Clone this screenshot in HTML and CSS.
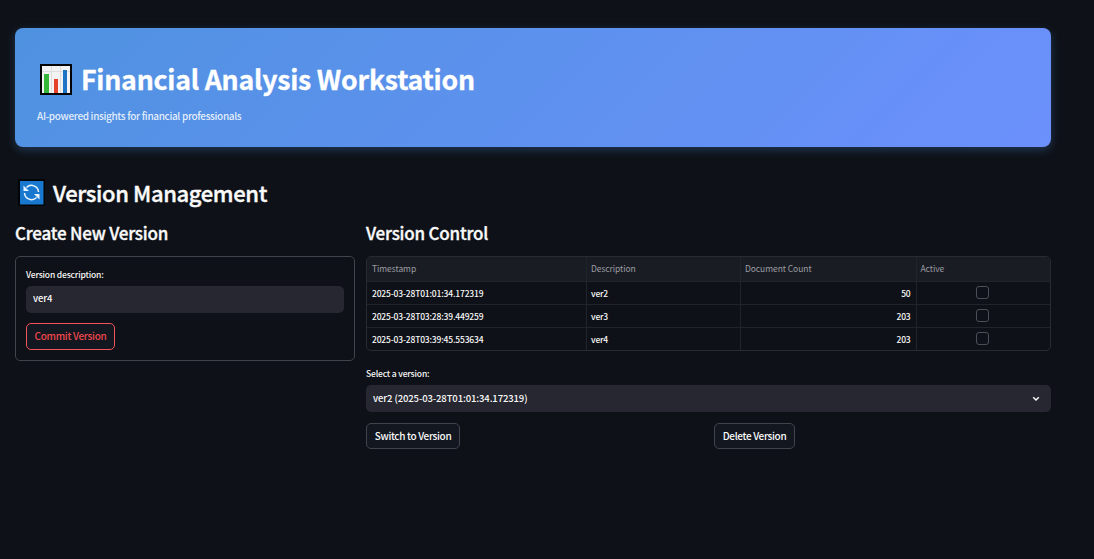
FILE: index.html
```html
<!DOCTYPE html>
<html lang="en">
<head>
<meta charset="utf-8">
<title>Financial Analysis Workstation</title>
<link rel="stylesheet" href="styles.css">
</head>
<body>
<main class="page">
  <header class="banner">
    <h1 class="banner-title">
      <svg class="chart-icon" viewBox="0 0 32 32" aria-hidden="true">
        <rect width="32" height="31" fill="#030405"/>
        <rect x="2" y="2" width="28" height="27" fill="#f3f3f3"/>
        <path d="M11.500 2v27M20.500 2v27M2 7.500h28" stroke="#dedede" fill="none"/>
        <rect x="4" y="10" width="5" height="19" fill="#35b83a"/>
        <rect x="14" y="15" width="4" height="14" fill="#e5412b"/>
        <rect x="23" y="6" width="4" height="23" fill="#1d74c6"/>
      </svg>
      <span>Financial Analysis Workstation</span>
    </h1>
    <p class="banner-sub">AI-powered insights for financial professionals</p>
  </header>

  <h2 class="section-title">
    <svg class="sync-icon" viewBox="0 0 27 27" aria-hidden="true">
      <rect width="27" height="27" fill="#030405"/>
      <rect x="2" y="2" width="23.500" height="23.500" fill="#1878d0"/>
      <path d="M8.500 8.500A7 7 0 0 1 20.500 13M18.500 18.500A7 7 0 0 1 6.500 14" fill="none" stroke="#e8f4ff" stroke-width="1.500"/>
      <path d="M5.500 6.500v5.500h5.500zM21.500 20.500v-5.500h-5.500z" fill="#e8f4ff"/>
    </svg>
    <span>Version Management</span>
  </h2>

  <div class="columns">
    <section class="create">
      <h3 class="column-title create-title">Create New Version</h3>
      <form class="card">
        <label class="label desc-label" for="desc">Version description:</label>
        <input class="field" id="desc" value="ver4">
        <button class="btn btn-primary" type="button"><span>Commit Version</span></button>
      </form>
    </section>

    <section class="control">
      <h3 class="column-title control-title">Version Control</h3>
      <div class="grid">
        <div class="row head"><div>Timestamp</div><div>Description</div><div>Document Count</div><div>Active</div></div>
        <div class="row"><div>2025-03-28T01:01:34.172319</div><div>ver2</div><div class="num">50</div><div class="mid"><i class="check"></i></div></div>
        <div class="row"><div>2025-03-28T03:28:39.449259</div><div>ver3</div><div class="num">203</div><div class="mid"><i class="check"></i></div></div>
        <div class="row"><div>2025-03-28T03:39:45.553634</div><div>ver4</div><div class="num">203</div><div class="mid"><i class="check"></i></div></div>
      </div>
      <div class="label select-label">Select a version:</div>
      <div class="select">
        <span>ver2 (2025-03-28T01:01:34.172319)</span>
        <svg class="chevron" viewBox="0 0 8 6" aria-hidden="true"><path d="M1.200 1.200 4 4 6.800 1.200" fill="none" stroke="#fafafa" stroke-width="1.500"/></svg>
      </div>
      <div class="actions">
        <div><button class="btn btn-switch" type="button"><span>Switch to Version</span></button></div>
        <div><button class="btn btn-delete" type="button"><span>Delete Version</span></button></div>
      </div>
    </section>
  </div>
</main>
</body>
</html>
```
FILE: styles.css
```css
* { box-sizing: border-box; }
body {
  margin: 0;
  background: #0e1117;
  color: #fafafa;
  font-family: "Noto Sans CJK SC", "Open Sans", sans-serif;
  white-space: nowrap;
}
h1, h2, h3, p { margin: 0; }
.page { width: 1094px; height: 559px; padding: 28px 43px 0 15px; overflow: hidden; }
.banner {
  height: 119px;
  padding: 32px 22px 0;
  border-radius: 8px;
  background: linear-gradient(135deg, #4f92e0, #6c90fc);
  box-shadow: 0 3px 10px rgba(74, 144, 226, .3);
}
.banner-title {
  display: flex; align-items: center; height: 40px; padding-left: 3px;
  font-size: 26.700px; font-weight: 700; line-height: 38px; letter-spacing: -.24px; color: #fff;
  -webkit-text-stroke: .3px #fff;
}
.banner-title span { padding-bottom: 2px; }
.chart-icon { width: 32px; height: 32px; margin-right: 9px; }
.banner-sub {
  margin-top: 8px; font-size: 10px; line-height: 16px; font-weight: 500;
  letter-spacing: -.34px; color: rgba(255, 255, 255, .85);
}
.section-title {
  display: flex; align-items: center; height: 36px; margin-top: 27px; padding-left: 3px;
  font-size: 22px; font-weight: 500; line-height: 34px; letter-spacing: -.38px;
  -webkit-text-stroke: .4px #fafafa;
}
.section-title span { padding-bottom: 1px; }
.sync-icon { width: 27px; height: 27px; margin-right: 8px; }
.columns { display: grid; grid-template-columns: 340px 685px; gap: 11px; margin-top: 9px; }
.column-title {
  height: 28px; margin-bottom: 9px; font-size: 17px; font-weight: 500; line-height: 28px;
  letter-spacing: -.21px; -webkit-text-stroke: .35px #fafafa;
}
.card { height: 105px; padding: 9px 10px; border: 1px solid #41444c; border-radius: 5px; }
.label { display: block; font-size: 8.500px; line-height: 16px; letter-spacing: -.16px; font-weight: 500; }
.field {
  display: block; width: 318px; height: 27px; margin: 4px 0 10px; padding: 0 7px 3px;
  border: 0; border-radius: 5px; background: #262730; color: #fafafa;
  font: 500 9.500px "Noto Sans CJK SC", "Open Sans", sans-serif; letter-spacing: -.1px;
}
.btn {
  display: flex; align-items: center; justify-content: center; height: 26px; padding: 0 0 1px;
  border: 1px solid #41444c; border-radius: 5px; background: #131720; color: #fafafa;
  font: 500 10px "Noto Sans CJK SC", "Open Sans", sans-serif; letter-spacing: -.34px;
}
.btn-primary { width: 89px; height: 27px; padding-bottom: 2px; border-color: #f2545b; color: #ee474b; letter-spacing: -.3px; }
.btn-switch { width: 94px; }
.btn-delete { width: 81px; }
.grid { height: 95px; border: 1px solid #292b33; border-radius: 5px; overflow: hidden; }
.row {
  display: grid; grid-template-columns: 219px 154px 175.500px 1fr; height: 23.300px;
  font-size: 8.500px; line-height: 22px; font-weight: 500; letter-spacing: -.17px;
}
.row + .row { border-top: 1px solid #22242c; }
.row > div { padding: 0 5px; }
.row > div + div { padding-left: 4px; border-left: 1px solid #22242c; }
.head { height: 23.500px; line-height: 23px; font-weight: 400; letter-spacing: -.07px; background: #1a1c24; color: #9a9ca2; }
.row > .num { text-align: right; }
.row > .mid { display: flex; align-items: center; justify-content: center; padding: 0 2px 1px 0; }
.check { width: 13px; height: 13px; border: 1px solid #4c4f57; border-radius: 3px; }
.select-label { margin-top: 14px; }
.select {
  display: flex; align-items: center; justify-content: space-between; height: 27px;
  margin: 4px 0 11px; padding: 0 11px 0 7px; border-radius: 5px; background: #262730;
  font-size: 9.500px; font-weight: 500; letter-spacing: -.11px;
}
.select span { padding-bottom: 2px; }
.chevron { width: 8px; height: 6px; }
.actions { display: grid; grid-template-columns: 337px 337px; gap: 11px; }
```
